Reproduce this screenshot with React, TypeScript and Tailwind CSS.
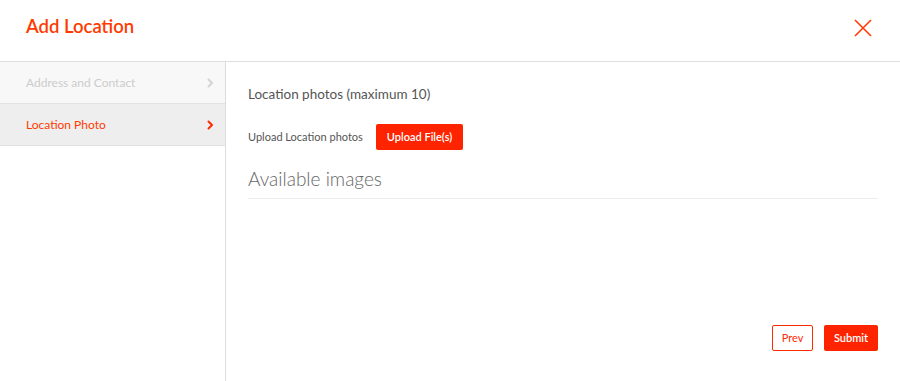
import React from "react";

function Chevron({ color }: { color: string }) {
  return (
    <svg width="7" height="10" viewBox="0 0 7 10" fill="none">
      <path d="M1.5 1.5 L5 5 L1.5 8.5" stroke={color} strokeWidth="2" strokeLinecap="round" strokeLinejoin="round" />
    </svg>
  );
}

export default function App() {
  return (
    <div
      className="w-[900px] h-[381px] bg-white flex flex-col overflow-hidden"
      style={{ fontFamily: "Lato, 'Noto Sans', sans-serif" }}
    >
      <div className="h-[62px] shrink-0 border-b border-[#dedede] flex items-center justify-between pl-[26px] pr-[28px]">
        <h1 className="text-[18.5px] font-semibold text-[#ff3a00] leading-none -mt-[8px]">Add Location</h1>
        <svg width="18" height="18" viewBox="0 0 18 18" className="-mt-[6px]">
          <path d="M1 1 L17 17 M17 1 L1 17" stroke="#ff3a00" strokeWidth="1.6" />
        </svg>
      </div>
      <div className="flex flex-1">
        <div className="w-[226px] shrink-0 border-r border-[#dcdcdc] flex flex-col">
          <div className="h-[42px] bg-[#f8f8f8] border-b border-[#e2e2e2] flex items-center justify-between pl-[26px] pr-[11px]">
            <span className="text-[12px] text-[#cccccc]">Address and Contact</span>
            <Chevron color="#d4d4d4" />
          </div>
          <div className="h-[42px] bg-[#eeeeee] border-b border-[#e2e2e2] flex items-center justify-between pl-[26px] pr-[11px]">
            <span className="text-[12px] text-[#ff3a00]">Location Photo</span>
            <Chevron color="#ff2a00" />
          </div>
        </div>
        <div className="flex-1 flex flex-col pl-[22px] pr-[22px]">
          <div className="mt-[22px] text-[13.5px] text-[#555555]">Location photos (maximum 10)</div>
          <div className="mt-[20px] flex items-center gap-[13px]">
            <span className="text-[11px] text-[#555555]">Upload Location photos</span>
            <button className="h-[26px] px-[11px] rounded-[2px] bg-[#ff2400] text-white text-[11px] font-semibold">
              Upload File(s)
            </button>
          </div>
          <div className="mt-[17px] text-[19px] leading-[24px] font-light text-[#666666] pb-[7px] border-b border-[#ececec]">
            Available images
          </div>
          <div className="flex-1" />
          <div className="flex justify-end gap-[11px] mb-[30px]">
            <button className="h-[26px] w-[41px] rounded-[2px] border border-[#ff2a00] text-[#ff2a00] text-[11px] bg-white">
              Prev
            </button>
            <button className="h-[26px] w-[54px] rounded-[2px] bg-[#ff2400] text-white text-[11px] font-semibold">
              Submit
            </button>
          </div>
        </div>
      </div>
    </div>
  );
}
